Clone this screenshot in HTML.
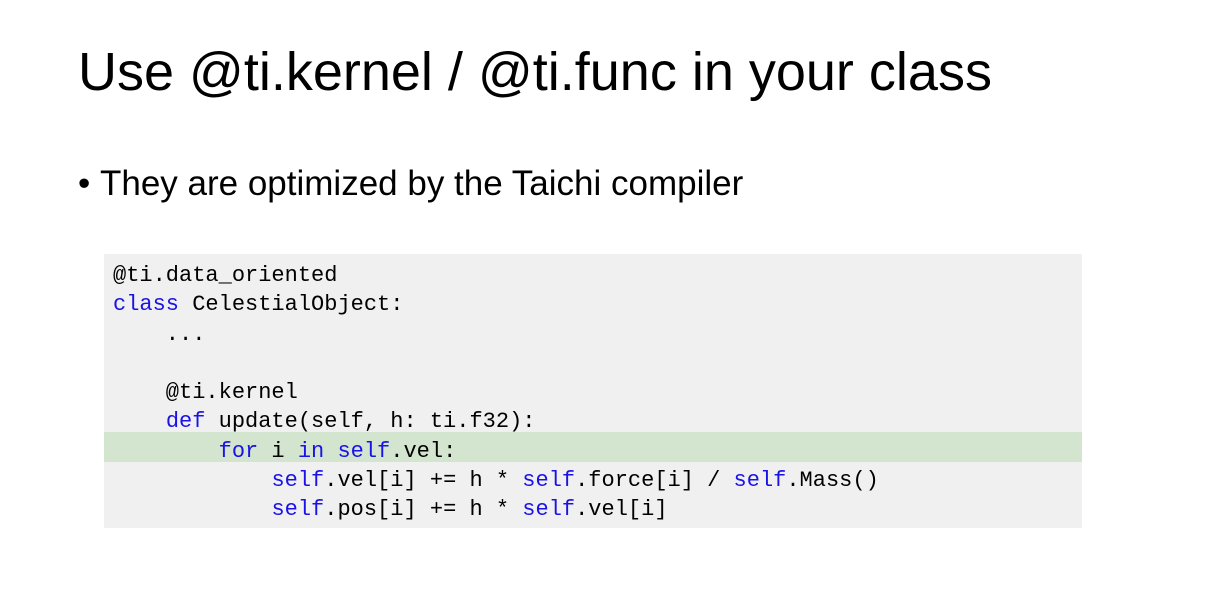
<!DOCTYPE html>
<html><head><meta charset="utf-8"><style>
body{margin:0;width:1229px;height:600px;background:#fff;position:relative;overflow:hidden;font-family:"Liberation Sans",sans-serif;}
h1{position:absolute;left:78px;top:42px;margin:0;font-weight:normal;font-size:54px;line-height:60px;color:#000;white-space:nowrap;}
.b{position:absolute;left:78px;top:164px;font-size:35px;line-height:40px;white-space:nowrap;}
.b span{position:absolute;left:22px;}
.box{position:absolute;left:104px;top:254px;width:978px;height:274px;background:#f0f0f0;}
.hl{position:absolute;left:104px;top:432px;width:978px;height:30px;background:#d3e5cf;}
pre{position:absolute;left:113px;top:261px;margin:0;font-family:"Liberation Mono",monospace;font-size:22px;line-height:29.3px;color:#000;}
.k{color:#1a12e6;}
</style></head><body>
<h1>Use @ti.kernel / @ti.func in your class</h1>
<div class="b">•<span>They are optimized by the Taichi compiler</span></div>
<div class="box"></div><div class="hl"></div>
<pre>@ti.data_oriented
<span class="k">class</span> CelestialObject:
    ...

    @ti.kernel
    <span class="k">def</span> update(self, h: ti.f32):
        <span class="k">for</span> i <span class="k">in</span> <span class="k">self</span>.vel:
            <span class="k">self</span>.vel[i] += h * <span class="k">self</span>.force[i] / <span class="k">self</span>.Mass()
            <span class="k">self</span>.pos[i] += h * <span class="k">self</span>.vel[i]</pre>
</body></html>
